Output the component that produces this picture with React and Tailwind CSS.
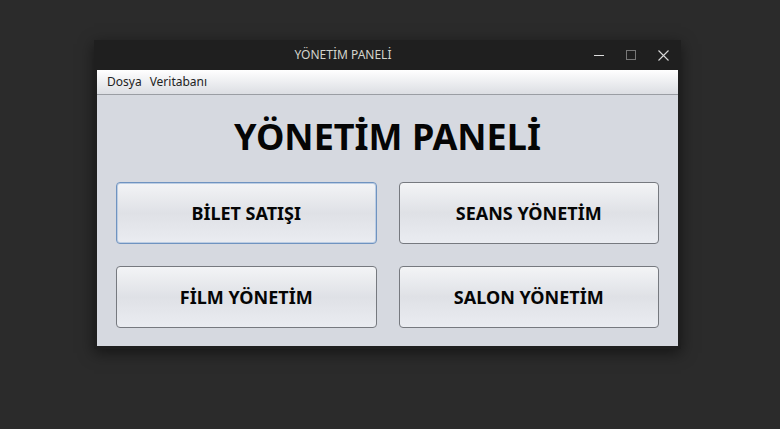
import React from 'react';

const font = { fontFamily: '"Noto Sans", "DejaVu Sans", sans-serif' };

function PanelButton({ label, focused }) {
  return (
    <button
      className={
        'h-[62px] rounded-[4px] border bg-gradient-to-b from-[#f3f4f6] via-[#dfe1e6] to-[#eaecf1] text-[18px] font-bold text-[#050505] ' +
        (focused ? 'border-[#6f93c0] shadow-[inset_0_0_0_1px_#bccde3]' : 'border-[#76797f]')
      }
    >
      {label}
    </button>
  );
}

export default function App() {
  return (
    <div className="w-[780px] h-[429px] bg-[#2b2b2b] relative overflow-hidden" style={font}>
      <div className="absolute left-[94px] top-[40px] w-[587px] bg-[#1f1f1f] shadow-[0_4px_14px_rgba(0,0,0,0.5)] pb-[3px]">
        {/* title bar */}
        <div className="h-[30px] flex items-center relative">
          <div className="flex-1 text-center text-[12px] text-[#d4d4cc] pr-[89px]">YÖNETİM PANELİ</div>
          <div className="absolute right-0 top-0 h-[30px] flex items-center">
            <div className="w-[32px] flex justify-center">
              <div className="w-[10px] h-[1px] bg-[#dcdcdc]" />
            </div>
            <div className="w-[32px] flex justify-center">
              <div className="w-[10px] h-[10px] border border-[#777]" />
            </div>
            <div className="w-[32px] flex justify-center mr-[2px]">
              <svg width="11" height="11" viewBox="0 0 11 11">
                <path d="M0.5 0.5 L10.5 10.5 M10.5 0.5 L0.5 10.5" stroke="#d8d8d8" strokeWidth="1.1" />
              </svg>
            </div>
          </div>
        </div>
        {/* content */}
        <div className="mx-[3px] bg-[#d6d9e0]">
          <div className="h-[25px] flex items-center gap-[8px] px-[10px] bg-gradient-to-b from-[#ffffff] to-[#dcdee3] border-b border-[#9a9da3] text-[12px] text-[#222]">
            <span>Dosya</span>
            <span>Veritabanı</span>
          </div>
          <div className="px-[19px] pb-[18px]">
            <div className="h-[87px] flex items-center justify-center text-[36px] font-bold text-[#050505] pb-[4px]">
              YÖNETİM PANELİ
            </div>
            <div className="grid grid-cols-2 gap-[22px]">
              <PanelButton label="BİLET SATIŞI" focused />
              <PanelButton label="SEANS YÖNETİM" />
              <PanelButton label="FİLM YÖNETİM" />
              <PanelButton label="SALON YÖNETİM" />
            </div>
          </div>
        </div>
      </div>
    </div>
  );
}
